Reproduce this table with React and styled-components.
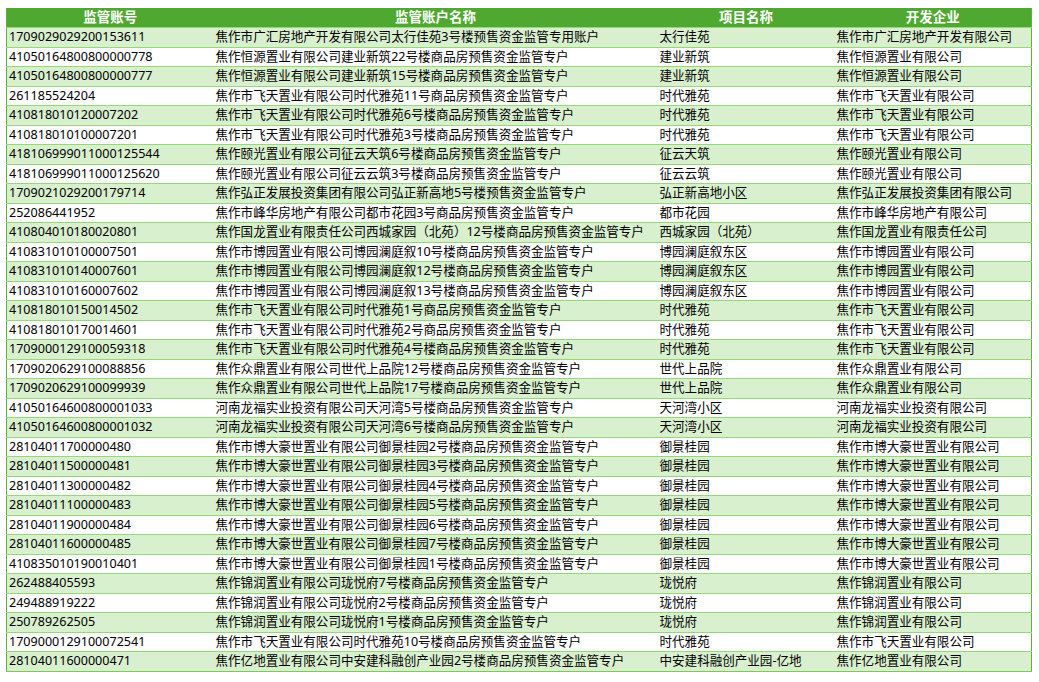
import React from "react";
import styled, { createGlobalStyle } from "styled-components";

const GlobalStyle = createGlobalStyle`
  html, body {
    margin: 0;
    padding: 0;
    background: #ffffff;
  }
  body {
    font-family: "Segoe UI", "Noto Sans", "Noto Sans CJK SC", sans-serif;
    color: #000;
  }
`;

const columns = [
  { title: "监管账号", width: 207 },
  { title: "监管账户名称", width: 444 },
  { title: "项目名称", width: 177 },
  { title: "开发企业", width: 197 },
];

const rows = [
  ["1709029029200153611", "焦作市广汇房地产开发有限公司太行佳苑3号楼预售资金监管专用账户", "太行佳苑", "焦作市广汇房地产开发有限公司"],
  ["41050164800800000778", "焦作恒源置业有限公司建业新筑22号楼商品房预售资金监管专户", "建业新筑", "焦作恒源置业有限公司"],
  ["41050164800800000777", "焦作恒源置业有限公司建业新筑15号楼商品房预售资金监管专户", "建业新筑", "焦作恒源置业有限公司"],
  ["261185524204", "焦作市飞天置业有限公司时代雅苑11号商品房预售资金监管专户", "时代雅苑", "焦作市飞天置业有限公司"],
  ["410818010120007202", "焦作市飞天置业有限公司时代雅苑6号楼商品房预售资金监管专户", "时代雅苑", "焦作市飞天置业有限公司"],
  ["410818010100007201", "焦作市飞天置业有限公司时代雅苑3号楼商品房预售资金监管专户", "时代雅苑", "焦作市飞天置业有限公司"],
  ["418106999011000125544", "焦作颐光置业有限公司征云天筑6号楼商品房预售资金监管专户", "征云天筑", "焦作颐光置业有限公司"],
  ["418106999011000125620", "焦作颐光置业有限公司征云云筑3号楼商品房预售资金监管专户", "征云云筑", "焦作颐光置业有限公司"],
  ["1709021029200179714", "焦作弘正发展投资集团有限公司弘正新高地5号楼预售资金监管专户", "弘正新高地小区", "焦作弘正发展投资集团有限公司"],
  ["252086441952", "焦作市峰华房地产有限公司都市花园3号商品房预售资金监管专户", "都市花园", "焦作市峰华房地产有限公司"],
  ["410804010180020801", "焦作国龙置业有限责任公司西城家园（北苑）12号楼商品房预售资金监管专户", "西城家园（北苑）", "焦作国龙置业有限责任公司"],
  ["410831010100007501", "焦作市博园置业有限公司博园澜庭叙10号楼商品房预售资金监管专户", "博园澜庭叙东区", "焦作市博园置业有限公司"],
  ["410831010140007601", "焦作市博园置业有限公司博园澜庭叙12号楼商品房预售资金监管专户", "博园澜庭叙东区", "焦作市博园置业有限公司"],
  ["410831010160007602", "焦作市博园置业有限公司博园澜庭叙13号楼商品房预售资金监管专户", "博园澜庭叙东区", "焦作市博园置业有限公司"],
  ["410818010150014502", "焦作市飞天置业有限公司时代雅苑1号商品房预售资金监管专户", "时代雅苑", "焦作市飞天置业有限公司"],
  ["410818010170014601", "焦作市飞天置业有限公司时代雅苑2号商品房预售资金监管专户", "时代雅苑", "焦作市飞天置业有限公司"],
  ["1709000129100059318", "焦作市飞天置业有限公司时代雅苑4号楼商品房预售资金监管专户", "时代雅苑", "焦作市飞天置业有限公司"],
  ["1709020629100088856", "焦作众鼎置业有限公司世代上品院12号楼商品房预售资金监管专户", "世代上品院", "焦作众鼎置业有限公司"],
  ["1709020629100099939", "焦作众鼎置业有限公司世代上品院17号楼商品房预售资金监管专户", "世代上品院", "焦作众鼎置业有限公司"],
  ["41050164600800001033", "河南龙福实业投资有限公司天河湾5号楼商品房预售资金监管专户", "天河湾小区", "河南龙福实业投资有限公司"],
  ["41050164600800001032", "河南龙福实业投资有限公司天河湾6号楼商品房预售资金监管专户", "天河湾小区", "河南龙福实业投资有限公司"],
  ["28104011700000480", "焦作市博大豪世置业有限公司御景桂园2号楼商品房预售资金监管专户", "御景桂园", "焦作市博大豪世置业有限公司"],
  ["28104011500000481", "焦作市博大豪世置业有限公司御景桂园3号楼商品房预售资金监管专户", "御景桂园", "焦作市博大豪世置业有限公司"],
  ["28104011300000482", "焦作市博大豪世置业有限公司御景桂园4号楼商品房预售资金监管专户", "御景桂园", "焦作市博大豪世置业有限公司"],
  ["28104011100000483", "焦作市博大豪世置业有限公司御景桂园5号楼商品房预售资金监管专户", "御景桂园", "焦作市博大豪世置业有限公司"],
  ["28104011900000484", "焦作市博大豪世置业有限公司御景桂园6号楼商品房预售资金监管专户", "御景桂园", "焦作市博大豪世置业有限公司"],
  ["28104011600000485", "焦作市博大豪世置业有限公司御景桂园7号楼商品房预售资金监管专户", "御景桂园", "焦作市博大豪世置业有限公司"],
  ["410835010190010401", "焦作市博大豪世置业有限公司御景桂园1号楼商品房预售资金监管专户", "御景桂园", "焦作市博大豪世置业有限公司"],
  ["262488405593", "焦作锦润置业有限公司珑悦府7号楼商品房预售资金监管专户", "珑悦府", "焦作锦润置业有限公司"],
  ["249488919222", "焦作锦润置业有限公司珑悦府2号楼商品房预售资金监管专户", "珑悦府", "焦作锦润置业有限公司"],
  ["250789262505", "焦作锦润置业有限公司珑悦府1号楼商品房预售资金监管专户", "珑悦府", "焦作锦润置业有限公司"],
  ["1709000129100072541", "焦作市飞天置业有限公司时代雅苑10号楼商品房预售资金监管专户", "时代雅苑", "焦作市飞天置业有限公司"],
  ["28104011600000471", "焦作亿地置业有限公司中安建科融创产业园2号楼商品房预售资金监管专户", "中安建科融创产业园-亿地", "焦作亿地置业有限公司"],
];

export default function App() {
  return (
    <>
      <GlobalStyle />
      <Page>
        <Table>
          <colgroup>
            {columns.map((col) => (
              <col key={col.title} style={{ width: col.width }} />
            ))}
          </colgroup>
          <thead>
            <tr>
              {columns.map((col) => (
                <HeadCell key={col.title}>{col.title}</HeadCell>
              ))}
            </tr>
          </thead>
          <tbody>
            {rows.map((row, index) => (
              <Row key={row[0]} $striped={index % 2 === 0}>
                {row.map((value, i) => (
                  <Cell key={i}>{value}</Cell>
                ))}
              </Row>
            ))}
          </tbody>
        </Table>
      </Page>
    </>
  );
}

const Page = styled.div`
  padding: 8px 0 0 6px;
`;

const Table = styled.table`
  width: 1025px;
  table-layout: fixed;
  border-collapse: collapse;
  border-left: 1px solid #5cb33c;
  border-right: 1px solid #5cb33c;
  border-bottom: 1px solid #7cc95a;
`;

const HeadCell = styled.th`
  height: 19px;
  padding: 0;
  background: #4fa82f;
  color: #ffffff;
  font-size: 13.5px;
  font-weight: bold;
  line-height: 19px;
  text-align: center;
  white-space: nowrap;
`;

const Row = styled.tr`
  background: ${(p) => (p.$striped ? "#d9f0cf" : "#ffffff")};
`;

const Cell = styled.td`
  height: 18.5px;
  padding: 0 2px;
  border-top: 1px solid #94d878;
  font-size: 12.55px;
  line-height: 18px;
  white-space: nowrap;
  overflow: hidden;
  vertical-align: middle;
`;
